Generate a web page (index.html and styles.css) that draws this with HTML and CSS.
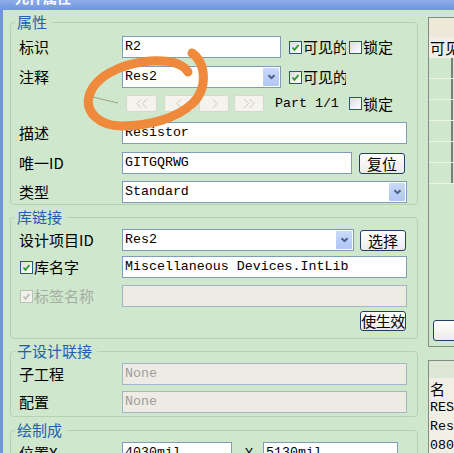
FILE: index.html
```html
<!DOCTYPE html>
<html lang="zh-CN">
<head>
<meta charset="utf-8">
<title>元件属性</title>
<link rel="stylesheet" href="styles.css">
</head>
<body>
<div class="titlebar"><span class="title-text">元件属性</span></div>
<div class="frame">
  <div class="form-col">
    <fieldset class="group g1">
      <legend>属性</legend>
      <div class="row">
        <span class="label">标识</span>
        <div class="field w159">R2</div>
        <span class="chk ml8"><span class="box"><svg viewBox="0 0 11 11"><polyline points="2.5,5.5 4.5,7.8 8.5,3"/></svg></span><span class="chk-text clip">可见的</span></span>
        <span class="chk ml3"><span class="box"></span><span class="chk-text">锁定</span></span>
      </div>
      <div class="row mt1">
        <span class="label">注释</span>
        <div class="field combo w159">Res2<span class="drop"><svg viewBox="0 0 9 6"><polyline points="1.5,1.2 4.5,4.2 7.5,1.2"/></svg></span></div>
        <span class="chk ml8"><span class="box"><svg viewBox="0 0 11 11"><polyline points="2.5,5.5 4.5,7.8 8.5,3"/></svg></span><span class="chk-text clip">可见的</span></span>
      </div>
      <div class="row nav-row">
        <span class="label"></span>
        <div class="nav">
          <span class="nbtn w31"><svg viewBox="0 0 16 12"><polyline points="8,1 3,6 8,11"/><polyline points="14,1 9,6 14,11"/></svg></span>
          <span class="nbtn ml7"><svg viewBox="0 0 10 12"><polyline points="7,1 2,6 7,11"/></svg></span>
          <span class="nbtn ml5"><svg viewBox="0 0 10 12"><polyline points="3,1 8,6 3,11"/></svg></span>
          <span class="nbtn ml5"><svg viewBox="0 0 16 12"><polyline points="2,1 7,6 2,11"/><polyline points="8,1 13,6 8,11"/></svg></span>
        </div>
        <span class="part">Part 1/1</span>
        <span class="chk"><span class="box"></span><span class="chk-text">锁定</span></span>
      </div>
      <div class="row mt3">
        <span class="label">描述</span>
        <div class="field w285">Resistor</div>
      </div>
      <div class="row mt1">
        <span class="label">唯一ID</span>
        <div class="field w230">GITGQRWG</div>
        <span class="btn ml7">复位</span>
      </div>
      <div class="row">
        <span class="label">类型</span>
        <div class="field combo w285">Standard<span class="drop"><svg viewBox="0 0 9 6"><polyline points="1.5,1.2 4.5,4.2 7.5,1.2"/></svg></span></div>
      </div>
    </fieldset>

    <fieldset class="group g2">
      <legend>库链接</legend>
      <div class="row">
        <span class="label">设计项目ID</span>
        <div class="field combo w232">Res2<span class="drop"><svg viewBox="0 0 9 6"><polyline points="1.5,1.2 4.5,4.2 7.5,1.2"/></svg></span></div>
        <span class="btn ml6">选择</span>
      </div>
      <div class="row">
        <span class="label chk-label"><span class="box"><svg viewBox="0 0 11 11"><polyline points="2.5,5.5 4.5,7.8 8.5,3"/></svg></span><span class="chk-text">库名字</span></span>
        <div class="field w285">Miscellaneous Devices.IntLib</div>
      </div>
      <div class="row mt2">
        <span class="label chk-label disabled"><span class="box"><svg viewBox="0 0 11 11"><polyline points="2.5,5.5 4.5,7.8 8.5,3"/></svg></span><span class="chk-text">标签名称</span></span>
        <div class="field off w285"></div>
      </div>
      <div class="row btn-row">
        <span class="btn apply">使生效</span>
      </div>
    </fieldset>

    <fieldset class="group g3">
      <legend>子设计联接</legend>
      <div class="row">
        <span class="label">子工程</span>
        <div class="field off w285">None</div>
      </div>
      <div class="row">
        <span class="label">配置</span>
        <div class="field off w285">None</div>
      </div>
    </fieldset>

    <fieldset class="group g4">
      <legend>绘制成</legend>
      <div class="row">
        <span class="label">位置X</span>
        <div class="field w110">4030mil</div>
        <span class="ylabel">Y</span>
        <div class="field w135">5130mil</div>
      </div>
    </fieldset>
  </div>

  <div class="side-col">
    <div class="panel p1">
      <div class="p-head"></div>
      <div class="p-row beige">可见</div>
      <div class="grid-row"><span class="cell"></span></div>
      <div class="grid-row"><span class="cell"></span></div>
      <div class="grid-row"><span class="cell"></span></div>
      <div class="grid-row"><span class="cell"></span></div>
      <div class="grid-row"><span class="cell"></span></div>
      <div class="grid-row"><span class="cell"></span></div>
      <div class="p-foot"><span class="side-btn"></span></div>
    </div>
    <div class="panel p2">
      <div class="p2-head"></div>
      <div class="p-row beige">名</div>
      <div class="p-row beige mono r18">RES</div>
      <div class="p-row beige mono r19">Res</div>
      <div class="p-row beige mono r19">080</div>
    </div>
  </div>
</div>

<svg class="scribble" viewBox="0 0 454 453" width="454" height="453">
  <path class="ink" d="M192,53 C206,63 208,88 193,103 C177,118 150,126 122,126 C99,126 85,112 89,96 C94,78 118,64 150,61 C170,60 183,64 188,72"/>
  <path class="scratch" d="M93,97 C100,99 110,101 118,103"/>
</svg>
</body>
</html>
```

FILE: styles.css
```css
* { box-sizing: border-box; }
html, body { margin: 0; padding: 0; }
body {
  position: relative;
  width: 454px;
  height: 453px;
  overflow: hidden;
  background: #cfe7cc;
  font-family: "Noto Sans CJK SC", sans-serif;
  font-size: 15px;
  color: #000;
}

.titlebar {
  height: 10px;
  background: linear-gradient(#8eaeea, #6f95e0);
  overflow: hidden;
}
.title-text {
  display: block;
  margin-top: -11px;
  padding-left: 15px;
  color: #fff;
  font-size: 14px;
  line-height: 16px;
  font-weight: bold;
}

.frame {
  display: flex;
  border-left: 3px solid #7193dc;
  height: 443px;
  overflow: hidden;
}

.form-col {
  flex: none;
  width: 425px;
  padding: 5px 10px 0 7px;
}

.group {
  margin: 0;
  width: 408px;
  min-width: 0;
  border: 1px solid #b4d2b1;
  border-radius: 4px;
  padding: 0 10px 0 8px;
  display: flex;
  flex-direction: column;
}
.group legend {
  margin-left: -4px;
  padding: 0 5px 0 2px;
  color: #1e60b2;
  font-size: 15px;
  line-height: 14px;
}
.g1 { padding-top: 7px; padding-bottom: 1px; gap: 7px; }
.g2 { margin-top: 5px; padding-top: 5px; padding-bottom: 7px; gap: 5px; }
.g3 { margin-top: 5px; padding-top: 5px; padding-bottom: 3px; gap: 6px; }
.g4 { margin-top: 6px; padding-top: 5px; padding-bottom: 6px; }

.row {
  display: flex;
  align-items: center;
  height: 22px;
  flex: none;
}
.mt1 { margin-top: 1px; }
.mt2 { margin-top: 2px; }
.mt3 { margin-top: 3px; }
.ml3 { margin-left: 3px; }
.ml5 { margin-left: 5px; }
.ml6 { margin-left: 6px; }
.ml7 { margin-left: 7px; }
.ml8 { margin-left: 8px; }

.label {
  flex: none;
  width: 103px;
  white-space: nowrap;
  line-height: 22px;
}

.field {
  position: relative;
  flex: none;
  height: 22px;
  border: 1px solid #7f9db9;
  background: #fff;
  padding: 0 2px;
  font-family: "Liberation Mono", monospace;
  font-size: 13.3px;
  line-height: 20px;
  white-space: nowrap;
  overflow: hidden;
}
.field.off {
  background: #eeebe4;
  border-color: #a3b5c7;
  color: #9d9d9d;
}
.w110 { width: 110px; }
.w135 { width: 135px; }
.w159 { width: 159px; }
.w230 { width: 230px; }
.w232 { width: 232px; }
.w285 { width: 285px; }

.drop {
  position: absolute;
  top: 1px;
  right: 1px;
  bottom: 1px;
  width: 16px;
  background: linear-gradient(#cad9fb, #b1c6f4);
  border-radius: 1px;
  display: flex;
  align-items: center;
  justify-content: center;
}
.drop svg { width: 9px; height: 6px; }
.drop polyline { fill: none; stroke: #4a5f8a; stroke-width: 2; }

.chk {
  display: flex;
  align-items: center;
  flex: none;
  white-space: nowrap;
}
.box {
  flex: none;
  width: 13px;
  height: 13px;
  border: 1px solid #2b5580;
  background: linear-gradient(135deg, #dedcd4, #fff);
  display: flex;
  align-items: center;
  justify-content: center;
}
.box svg { width: 11px; height: 11px; }
.box polyline { fill: none; stroke: #2a9a2a; stroke-width: 1.8; }
.chk-text { margin-left: 1px; line-height: 22px; }
.clip { width: 43px; overflow: hidden; }

.chk-label { display: flex; align-items: center; padding-left: 1px; }
.chk-label.disabled { color: #a4ada3; }
.chk-label.disabled .box { border-color: #b9c0b8; background: #f2f1ec; }
.chk-label.disabled polyline { stroke: #b9beb7; }

.nav-row { height: 17px; margin-top: 0; }
.g1 .nav-row + .row { margin-top: 3px; }
.nav { display: flex; margin-left: 4px; flex: none; }
.nbtn {
  width: 30px;
  height: 17px;
  border: 1px solid #d8d7ce;
  border-radius: 2px;
  background: #f4f3ee;
  display: flex;
  align-items: center;
  justify-content: center;
}
.nbtn.w31 { width: 31px; }
.nbtn svg { height: 11px; width: auto; }
.nbtn svg[viewBox="0 0 16 12"] { width: 15px; }
.nbtn svg[viewBox="0 0 10 12"] { width: 9px; }
.nbtn polyline { fill: none; stroke: #c3c3bb; stroke-width: 1; }
.part {
  flex: none;
  width: 74px;
  margin-left: 11px;
  font-family: "Liberation Mono", monospace;
  font-size: 13.3px;
}

.btn {
  flex: none;
  width: 46px;
  height: 21px;
  border: 1px solid #20406a;
  border-radius: 3px;
  background: linear-gradient(#ffffff, #ecebe5);
  text-align: center;
  line-height: 19px;
  font-size: 15px;
  white-space: nowrap;
  overflow: hidden;
}
.btn-row { justify-content: flex-end; height: 20px; margin-top: -1px; }
.btn.apply { height: 20px; line-height: 18px; margin-right: 1px; letter-spacing: -0.5px; }

.ylabel {
  flex: none;
  width: 31px;
  padding-left: 13px;
  font-family: "Liberation Mono", monospace;
  font-size: 13.3px;
}

.side-col {
  flex: none;
  width: 80px;
  padding-top: 7px;
}
.panel {
  border: 1px solid #868a86;
  display: flex;
  flex-direction: column;
}
.p1 { height: 330px; }
.p2 { margin-top: 13px; height: 120px; border-bottom: none; }
.p-head { height: 19px; background: #ece9d8; flex: none; }
.p2-head { height: 17px; background: #dbe6d5; flex: none; }
.p-row {
  flex: none;
  height: 21px;
  padding-left: 1px;
  line-height: 21px;
  white-space: nowrap;
}
.p-row.beige { background: #f1efe5; }
.p-row.mono { font-family: "Liberation Mono", monospace; font-size: 13.3px; }
.p-row.r18 { height: 18px; line-height: 18px; }
.p-row.r19 { height: 19px; line-height: 19px; }
.grid-row {
  flex: none;
  height: 21px;
  border-bottom: 1px solid #eaf4e8;
  display: flex;
}
.grid-row .cell {
  width: 24px;
  border-right: 2px solid #7a7d79;
}
.p-foot {
  margin-top: auto;
  padding: 0 0 5px 4px;
}
.side-btn {
  display: block;
  height: 21px;
  border: 1px solid #20406a;
  border-radius: 3px;
  background: linear-gradient(#ffffff, #ecebe5);
}

.scribble {
  position: absolute;
  left: 0;
  top: 0;
  pointer-events: none;
}
.scribble .ink {
  fill: none;
  stroke: #ef8a3d;
  stroke-width: 9;
  stroke-linecap: round;
  stroke-linejoin: round;
}
.scribble .scratch {
  fill: none;
  stroke: #8a6a4a;
  stroke-width: 1;
  opacity: 0.6;
}
```
